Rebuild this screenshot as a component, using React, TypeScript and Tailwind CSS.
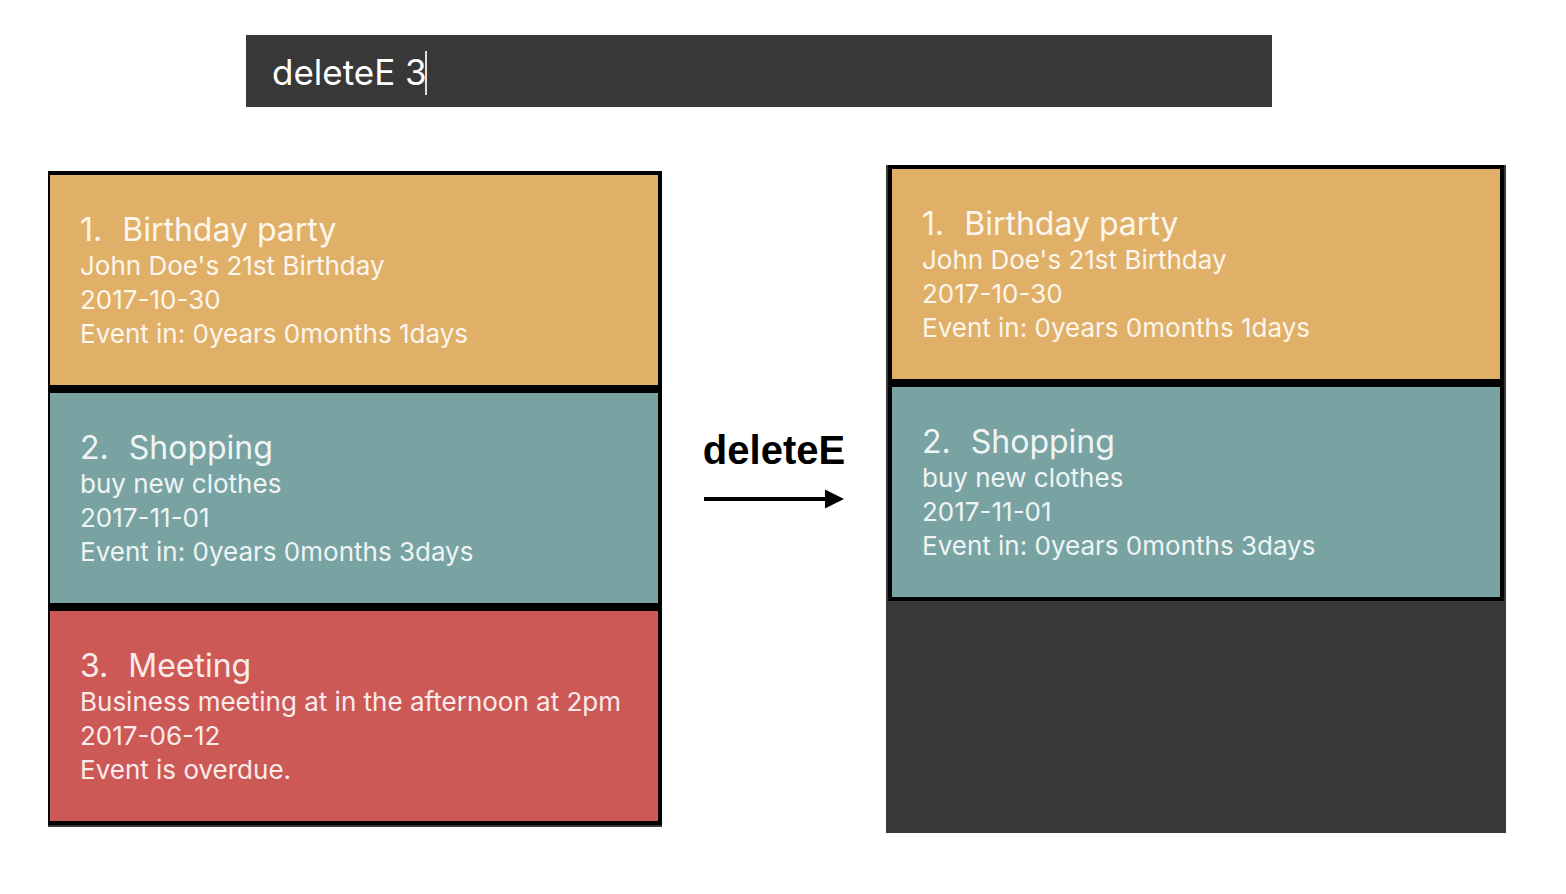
import React, { useState } from "react";

type EventItem = {
  id: number;
  title: string;
  description: string;
  date: string;
  status: string;
  tone: string;
};

const birthday: EventItem = {
  id: 1,
  title: "Birthday party",
  description: "John Doe's 21st Birthday",
  date: "2017-10-30",
  status: "Event in: 0years 0months 1days",
  tone: "bg-[#e0b068] text-[#fcf6ed]",
};

const shopping: EventItem = {
  id: 2,
  title: "Shopping",
  description: "buy new clothes",
  date: "2017-11-01",
  status: "Event in: 0years 0months 3days",
  tone: "bg-[#79a3a2] text-[#eff4f4]",
};

const meeting: EventItem = {
  id: 3,
  title: "Meeting",
  description: "Business meeting at in the afternoon at 2pm",
  date: "2017-06-12",
  status: "Event is overdue.",
  tone: "bg-[#cd5957] text-[#faebeb]",
};

function EventCard({ event, edge }: { event: EventItem; edge: string }) {
  return (
    <li className={`border-4 border-black pt-9 pb-[34px] pl-[30px] ${edge} ${event.tone}`}>
      <h2 className="flex gap-5 text-[32px] leading-[38px]">
        <span>{event.id}.</span>
        <span>{event.title}</span>
      </h2>
      <div className="text-[26px] leading-[34px]">
        <p>{event.description}</p>
        <p>{event.date}</p>
        <p>{event.status}</p>
      </div>
    </li>
  );
}

function CommandBox() {
  const [command, setCommand] = useState("deleteE 3");
  return (
    <div className="mr-[234px] ml-[198px] flex h-[72px] items-center bg-[#383838] pl-[26px]">
      <input
        type="text"
        aria-label="Command"
        value={command}
        onChange={(e) => setCommand(e.target.value)}
        className="field-sizing-content h-[72px] bg-transparent pt-0.5 pr-1 text-[35px] text-white caret-transparent outline-none"
      />
      <span className="mt-1 -ml-1.5 h-11 w-0.5 bg-[#e0e0e0]" />
    </div>
  );
}

export default function App() {
  return (
    <main className="min-h-screen bg-white pt-[35px] pr-[60px] pb-[61px] pl-12 font-['Inter',sans-serif]">
      <CommandBox />
      <div className="mt-[58px] grid grid-cols-[614fr_224fr_620fr] items-start">
        <ul className="mt-1.5 bg-[#383838] pb-0.5">
          <EventCard event={birthday} edge="border-l-2" />
          <EventCard event={shopping} edge="border-l-2" />
          <EventCard event={meeting} edge="border-l-2" />
        </ul>

        <div className="mt-[261px] flex flex-col items-center">
          <p className="font-['Liberation_Sans',sans-serif] text-[40px] leading-[48px] font-bold text-black">
            deleteE
          </p>
          <svg viewBox="0 0 140 20" className="mt-[15px] w-[140px]" aria-hidden="true">
            <path d="M0 8h121V0.5L140 10L121 19.5V12H0Z" fill="#000" />
          </svg>
        </div>

        <ul className="min-h-[668px] bg-[#383838] px-0.5">
          <EventCard event={birthday} edge="border-l-4" />
          <EventCard event={shopping} edge="border-l-4" />
        </ul>
      </div>
    </main>
  );
}
